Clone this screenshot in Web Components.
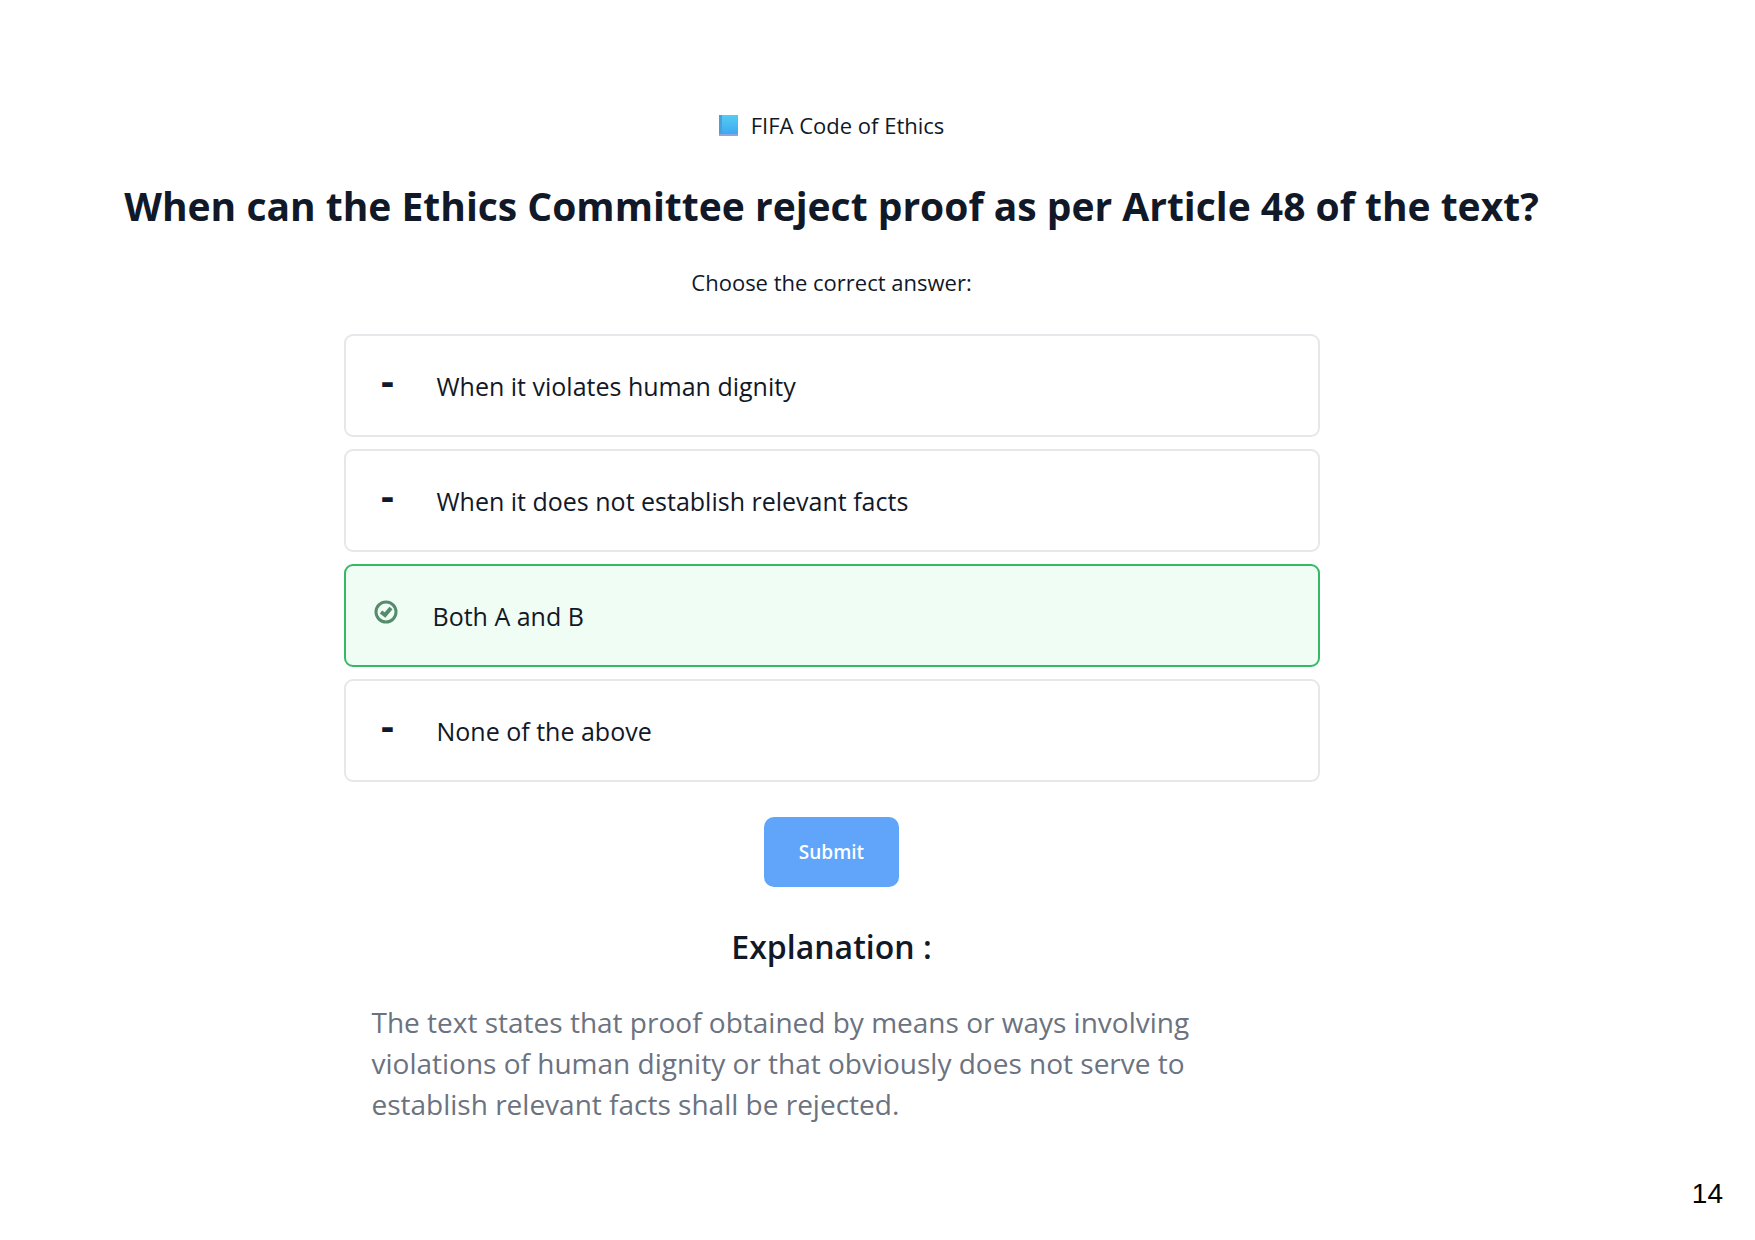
<!DOCTYPE html>
<html lang="en">
<head>
<meta charset="utf-8">
<title>FIFA Code of Ethics</title>
<style>
    body {
        margin: 0;
        background: #fff;
        color: #111827;
        font-family: "Open Sans", "Noto Sans", sans-serif;
    }
</style>
</head>
<body>
<quiz-page page="14">
    <quiz-topic slot="topic">FIFA Code of Ethics</quiz-topic>
    <quiz-question>
        <span slot="title">When can the Ethics Committee reject proof as per Article 48 of the text?</span>
        <span slot="hint">Choose the correct answer:</span>
        <quiz-option>When it violates human dignity</quiz-option>
        <quiz-option>When it does not establish relevant facts</quiz-option>
        <quiz-option checked>Both A and B</quiz-option>
        <quiz-option>None of the above</quiz-option>
    </quiz-question>
    <quiz-explanation>The text states that proof obtained by means or ways involving violations of human dignity or that obviously does not serve to establish relevant facts shall be rejected.</quiz-explanation>
</quiz-page>

<script>
class QuizPage extends HTMLElement {
    constructor() {
        super();
        this.attachShadow({ mode: 'open' });
    }

    connectedCallback() {
        this.shadowRoot.innerHTML = `
            <style>
                :host {
                    display: flex;
                    flex-direction: column;
                    min-height: 100vh;
                    box-sizing: border-box;
                    padding: 107px 32px 30px 0;
                }

                main {
                    flex: 1;
                    display: flex;
                    flex-direction: column;
                    align-items: center;
                    margin-right: 60px;
                }

                footer {
                    align-self: flex-end;
                    color: #000;
                    font: 28px/32px "Liberation Sans", Arial, sans-serif;
                }
            </style>
            <main>
                <slot name="topic"></slot>
                <slot></slot>
            </main>
            <footer>${this.getAttribute('page')}</footer>
        `;
    }
}

class QuizTopic extends HTMLElement {
    constructor() {
        super();
        this.attachShadow({ mode: 'open' });
    }

    connectedCallback() {
        this.shadowRoot.innerHTML = `
            <style>
                :host {
                    display: flex;
                    align-items: center;
                    gap: 13px;
                    font-size: 22px;
                    line-height: 36px;
                }
            </style>
            <svg width="19" height="21" viewBox="0 0 19 21" aria-hidden="true">
                <defs>
                    <linearGradient id="cover" x1="0" y1="0" x2="0" y2="1">
                        <stop offset="0" stop-color="#54cdf2"/>
                        <stop offset="1" stop-color="#3ba5f0"/>
                    </linearGradient>
                </defs>
                <rect width="19" height="21" fill="url(#cover)"/>
                <rect width="3" height="19" fill="#4a9fd6"/>
                <rect y="19" width="19" height="2" fill="#8fa5e2"/>
            </svg>
            <slot></slot>
        `;
    }
}

class QuizQuestion extends HTMLElement {
    constructor() {
        super();
        this.attachShadow({ mode: 'open' });
    }

    connectedCallback() {
        this.render();
        this.addOptionEvents();
    }

    render() {
        this.shadowRoot.innerHTML = `
            <style>
                :host {
                    display: block;
                    width: 100%;
                }

                form {
                    display: flex;
                    flex-direction: column;
                    align-items: center;
                }

                h1 {
                    margin: 33px 0 0;
                    font-size: 39px;
                    line-height: 60px;
                    font-weight: 700;
                    text-align: center;
                }

                p {
                    margin: 28px 0 0;
                    font-size: 22px;
                    line-height: 36px;
                }

                .options {
                    display: grid;
                    gap: 12px;
                    width: 59%;
                    max-width: 976px;
                    margin-top: 34px;
                }

                button {
                    margin-top: 35px;
                    padding: 17px 35px;
                    border: 0;
                    border-radius: 10px;
                    background: #60a5fa;
                    color: #fff;
                    font: 600 19px/36px "Open Sans", "Noto Sans", sans-serif;
                    cursor: pointer;
                }
            </style>
            <form>
                <h1><slot name="title"></slot></h1>
                <p><slot name="hint"></slot></p>
                <div class="options" role="radiogroup"><slot></slot></div>
                <button type="submit">Submit</button>
            </form>
        `;
    }

    addOptionEvents() {
        const options = this.querySelectorAll('quiz-option');
        this.addEventListener('option-change', (event) => {
            options.forEach(option => {
                option.toggleAttribute('checked', option === event.target);
            });
        });
        this.shadowRoot.querySelector('form').addEventListener('submit', (event) => {
            event.preventDefault();
        });
    }
}

class QuizOption extends HTMLElement {
    static observedAttributes = ['checked'];

    constructor() {
        super();
        this.attachShadow({ mode: 'open' });
        this.shadowRoot.innerHTML = `
            <style>
                :host {
                    display: block;
                    font-size: 25px;
                    line-height: 36px;
                }

                label {
                    position: relative;
                    display: flex;
                    align-items: center;
                    box-sizing: border-box;
                    min-height: 103px;
                    padding: 0 28px;
                    border: 2px solid #e5e7eb;
                    border-radius: 9px;
                    cursor: pointer;
                }

                :host([checked]) label {
                    border-color: #36b865;
                    background: #effdf4;
                }

                input {
                    position: absolute;
                    inset: 0;
                    margin: 0;
                    opacity: 0;
                }

                .mark {
                    display: flex;
                    justify-content: center;
                    width: 28px;
                    margin-right: 35px;
                    padding-bottom: 12px;
                    font-size: 40px;
                    font-weight: 700;
                }

                .tick,
                :host([checked]) .dash {
                    display: none;
                }

                :host([checked]) .tick {
                    display: block;
                }

                :host([checked]) .mark {
                    width: 24px;
                    padding-bottom: 8px;
                }
            </style>
            <label>
                <input type="radio">
                <span class="mark">
                    <span class="dash">-</span>
                    <svg class="tick" width="24" height="24" viewBox="0 0 24 24" fill="none" stroke="#568b6c" aria-hidden="true">
                        <circle cx="12" cy="12" r="10" stroke-width="3"/>
                        <path d="M7 12l4 3 6-7" stroke-width="4"/>
                    </svg>
                </span>
                <slot></slot>
            </label>
        `;
    }

    connectedCallback() {
        this.input.addEventListener('change', () => {
            this.dispatchEvent(new CustomEvent('option-change', { bubbles: true }));
        });
    }

    attributeChangedCallback() {
        this.input.checked = this.hasAttribute('checked');
    }

    get input() {
        return this.shadowRoot.querySelector('input');
    }
}

class QuizExplanation extends HTMLElement {
    constructor() {
        super();
        this.attachShadow({ mode: 'open' });
    }

    connectedCallback() {
        this.shadowRoot.innerHTML = `
            <style>
                :host {
                    display: flex;
                    flex-direction: column;
                    align-items: center;
                    width: 59%;
                    max-width: 976px;
                    margin-top: 40px;
                }

                h2 {
                    margin: 0;
                    font-size: 32px;
                    line-height: 40px;
                    font-weight: 600;
                }

                p {
                    align-self: flex-start;
                    max-width: 820px;
                    margin: 35px 28px 0;
                    color: #6b7280;
                    font-size: 28px;
                    line-height: 41px;
                }
            </style>
            <h2>Explanation :</h2>
            <p><slot></slot></p>
        `;
    }
}

customElements.define('quiz-page', QuizPage);
customElements.define('quiz-topic', QuizTopic);
customElements.define('quiz-question', QuizQuestion);
customElements.define('quiz-option', QuizOption);
customElements.define('quiz-explanation', QuizExplanation);
</script>
</body>
</html>
